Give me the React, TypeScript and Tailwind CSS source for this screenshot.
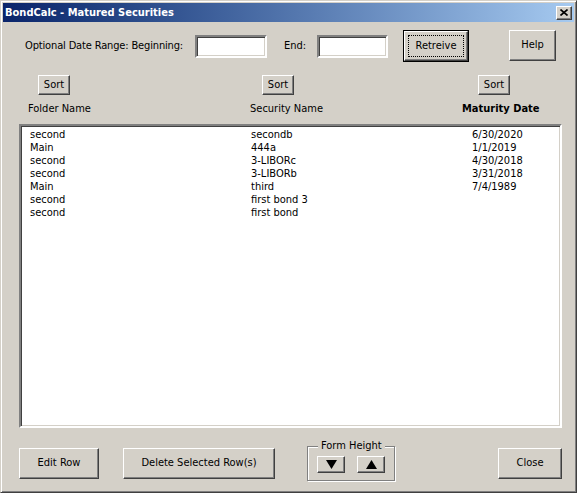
import React from 'react'

const rows = [
  ['second', 'secondb', '6/30/2020'],
  ['Main', '444a', '1/1/2019'],
  ['second', '3-LIBORc', '4/30/2018'],
  ['second', '3-LIBORb', '3/31/2018'],
  ['Main', 'third', '7/4/1989'],
  ['second', 'first bond 3', ''],
  ['second', 'first bond', ''],
]

// classic raised 3D button edge
const raised =
  'border border-t-white border-l-white border-r-[#404040] border-b-[#404040] shadow-[inset_-1px_-1px_0_#808080] bg-[#d4d0c8] flex items-center justify-center text-black'

const sunken =
  'border-2 border-t-[#808080] border-l-[#808080] border-r-white border-b-white shadow-[inset_1px_1px_0_#404040,inset_-1px_-1px_0_#d4d0c8] bg-white'

function Btn({ label, className }: { label: React.ReactNode; className: string }) {
  return <div className={`${raised} ${className}`}>{label}</div>
}

export default function App() {
  return (
    <div className="w-[577px] h-[493px] bg-[#d4d0c8] border border-t-[#d4d0c8] border-l-[#d4d0c8] border-r-[#404040] border-b-[#404040] shadow-[inset_1px_1px_0_#fff,inset_-1px_-1px_0_#808080] p-[2px] flex flex-col font-['DejaVu_Sans_Condensed','DejaVu_Sans',sans-serif] font-stretch-condensed text-[11px] text-black whitespace-nowrap select-none">
      {/* title bar */}
      <div className="h-[19px] flex items-center justify-between bg-gradient-to-r from-[#0a246a] to-[#a6caf0] pl-[2px] pr-[2px]">
        <span className="text-white font-bold text-[11px] leading-none">BondCalc - Matured Securities</span>
        <div className={`${raised} w-[16px] h-[14px]`}>
          <svg width="8" height="7" viewBox="0 0 8 7">
            <path d="M0.5 0.5 L7.5 6.5 M7.5 0.5 L0.5 6.5" stroke="black" strokeWidth="1.6" />
          </svg>
        </div>
      </div>

      {/* date range row */}
      <div className="flex items-center h-[32px] mt-[8px] pl-[22px]">
        <span className="w-[170px] tracking-[-0.15px]">Optional Date Range: Beginning:</span>
        <div className={`${sunken} w-[72px] h-[23px]`} />
        <span className="ml-[17px] w-[33px]">End:</span>
        <div className={`${sunken} w-[71px] h-[23px]`} />
        <div className="ml-[15px] w-[66px] h-[32px] border border-black">
          <div className="w-full h-full border border-t-white border-l-white border-r-[#404040] border-b-[#404040] shadow-[inset_-1px_-1px_0_#808080] p-[3px]">
            <div className="w-full h-full border border-dotted border-black flex items-center justify-center">
              Retreive
            </div>
          </div>
        </div>
        <Btn label="Help" className="ml-[40px] w-[47px] h-[31px] self-start" />
      </div>

      {/* sort buttons */}
      <div className="flex mt-[13px]">
        <Btn label="Sort" className="ml-[35px] w-[32px] h-[20px]" />
        <Btn label="Sort" className="ml-[192px] w-[32px] h-[20px]" />
        <Btn label="Sort" className="ml-[184px] w-[32px] h-[20px]" />
      </div>

      {/* headers */}
      <div className="flex mt-[7px] h-[14px] leading-[14px] pl-[25px]">
        <span className="w-[222px]">Folder Name</span>
        <span className="w-[212px]">Security Name</span>
        <span className="font-bold">Maturity Date</span>
      </div>

      {/* list */}
      <div className={`${sunken} mt-[8px] ml-[16px] w-[543px] h-[304px] pt-[2px] pl-[9px]`}>
        {rows.map((r, i) => (
          <div key={i} className="flex h-[13px] leading-[13px]">
            <span className="w-[221px]">{r[0]}</span>
            <span className="w-[221px]">{r[1]}</span>
            <span>{r[2]}</span>
          </div>
        ))}
      </div>

      {/* bottom buttons */}
      <div className="flex items-start mt-[18px]">
        <Btn label="Edit Row" className="mt-[2px] ml-[16px] w-[80px] h-[31px]" />
        <Btn label="Delete Selected Row(s)" className="mt-[2px] ml-[24px] w-[152px] h-[31px]" />
        <div className="relative ml-[32px] w-[88px] h-[35px] border border-[#808080] shadow-[inset_1px_1px_0_#fff,1px_1px_0_#fff] flex pt-[9px] pl-[9px] gap-[12px]">
          <span className="absolute -top-[8px] left-[10px] bg-[#d4d0c8] px-[3px] leading-[14px]">
            Form Height
          </span>
          <Btn
            label={
              <svg width="11" height="9" viewBox="0 0 11 9">
                <polygon points="0,0 11,0 5.5,9" fill="black" />
              </svg>
            }
            className="w-[28px] h-[17px]"
          />
          <Btn
            label={
              <svg width="11" height="9" viewBox="0 0 11 9">
                <polygon points="5.5,0 11,9 0,9" fill="black" />
              </svg>
            }
            className="w-[28px] h-[17px]"
          />
        </div>
        <Btn label="Close" className="mt-[2px] ml-[103px] w-[64px] h-[31px]" />
      </div>
    </div>
  )
}
